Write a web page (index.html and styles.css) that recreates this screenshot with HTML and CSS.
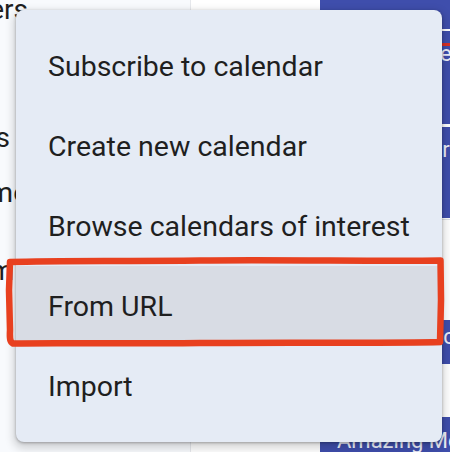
FILE: index.html
```html
<!DOCTYPE html>
<html lang="en">
<head>
<meta charset="utf-8">
<title>Calendar menu</title>
<link rel="stylesheet" href="styles.css">
</head>
<body>
<div class="page">
  <aside class="sidebar">
    <div class="side-row row-1"><span class="peek">Other members</span></div>
    <div class="side-row row-2"><span class="peek">Holidays</span></div>
    <div class="side-row row-3"><span class="peek">Name</span></div>
    <div class="side-row row-4"><span class="peek">Team</span></div>
  </aside>
  <div class="day"></div>
  <div class="day events">
    <div class="event ev-1"></div>
    <div class="event ev-2"><span class="ev-title">Standup meeting</span><div class="now-line"></div></div>
    <div class="event ev-3"><span class="ev-title">Team dinner</span></div>
    <div class="hour-line"></div>
    <div class="event ev-4"><span class="ev-title">Product sync</span></div>
    <div class="event ev-5"><span class="ev-title">Amazing Meetup</span></div>
  </div>

  <div class="menu" role="menu">
    <div class="menu-item" role="menuitem">Subscribe to calendar</div>
    <div class="menu-item" role="menuitem">Create new calendar</div>
    <div class="menu-item" role="menuitem">Browse calendars of interest</div>
    <div class="menu-item is-hover" role="menuitem">From URL</div>
    <div class="menu-item" role="menuitem">Import</div>
  </div>

  <svg class="annotation" width="450" height="452" viewBox="0 0 450 452" aria-hidden="true">
    <path d="M10 262 C 60 260, 120 261.5, 200 260.5 S 380 261.5, 440.5 260.5 L 441 300 L 440 342 C 380 343.5, 300 342, 200 343 S 60 342.5, 13 343.5 C 10 342, 9.5 339, 10 330 L 9 290 Z" fill="none" stroke="#e8401f" stroke-width="6.5" stroke-linejoin="round"/>
  </svg>
</div>
</body>
</html>
```
FILE: styles.css
```css
html, body {
  margin: 0;
  padding: 0;
}

body {
  font-family: Roboto, "Noto Sans", "Liberation Sans", sans-serif;
  background: #ffffff;
}

.page {
  position: relative;
  width: 450px;
  height: 452px;
  overflow: hidden;
  display: grid;
  grid-template-columns: 190px 130px 130px;
}

/* ---------- sidebar ---------- */
.sidebar {
  background: #f8fafd;
  display: flex;
  flex-direction: column;
}

.side-row {
  height: 32px;
  font-size: 28px;
  line-height: 32px;
  color: #1f1f1f;
  display: flex;
  justify-content: flex-end;
  width: 28px;
  overflow: hidden;
  white-space: nowrap;
}

.peek {
  flex: none;
}

.row-1 { margin-top: -6px; }
.row-2 { margin-top: 96px; width: 10px; }
.row-3 { margin-top: 23px; }
.row-4 { margin-top: 46px; width: 14px; }

/* ---------- day columns ---------- */
.day {
  background: #ffffff;
  border-left: 1px solid #e6e8ec;
}

.events {
  display: flex;
  flex-direction: column;
  background: #ffffff;
  border-left: none;
}

.event {
  background: #3f4eac;
  color: #eef0fa;
  font-size: 22px;
  line-height: 30px;
  white-space: nowrap;
  overflow: hidden;
  padding-left: 14px;
  box-sizing: border-box;
  flex: none;
}

.ev-1 { height: 29px; }
.ev-2 { height: 93px; margin-top: 2px; padding-top: 8px; position: relative; }
.ev-3 { height: 91px; margin-top: 3px; padding-top: 8px; padding-left: 8px; }
.ev-4 { height: 44px; margin-top: 102px; padding-top: 2px; padding-left: 7px; }
.ev-5 { height: 60px; margin-top: 53px; padding-top: 9px; padding-left: 17px; }

.now-line {
  position: absolute;
  left: 0;
  right: 0;
  top: 12px;
  height: 3px;
  background: #d93025;
}

.hour-line {
  height: 1px;
  background: #dde1e6;
  margin-top: 1px;
  margin-bottom: -2px;
}

/* ---------- menu ---------- */
.menu {
  position: absolute;
  left: 16px;
  top: 10px;
  width: 426px;
  height: 432px;
  box-sizing: border-box;
  padding: 16px 0;
  background: #e5ebf5;
  border-radius: 8px;
  box-shadow: 0 1px 3px rgba(0, 0, 0, 0.3), 0 4px 8px 3px rgba(0, 0, 0, 0.15);
  display: flex;
  flex-direction: column;
}

.menu-item {
  height: 80px;
  flex: none;
  display: flex;
  align-items: center;
  padding-left: 32px;
  font-size: 28.5px;
  color: #1f1f1f;
  white-space: nowrap;
}

.menu-item.is-hover {
  background: #d8dce4;
}

/* ---------- annotation ---------- */
.annotation {
  position: absolute;
  left: 0;
  top: 0;
  pointer-events: none;
}
```
